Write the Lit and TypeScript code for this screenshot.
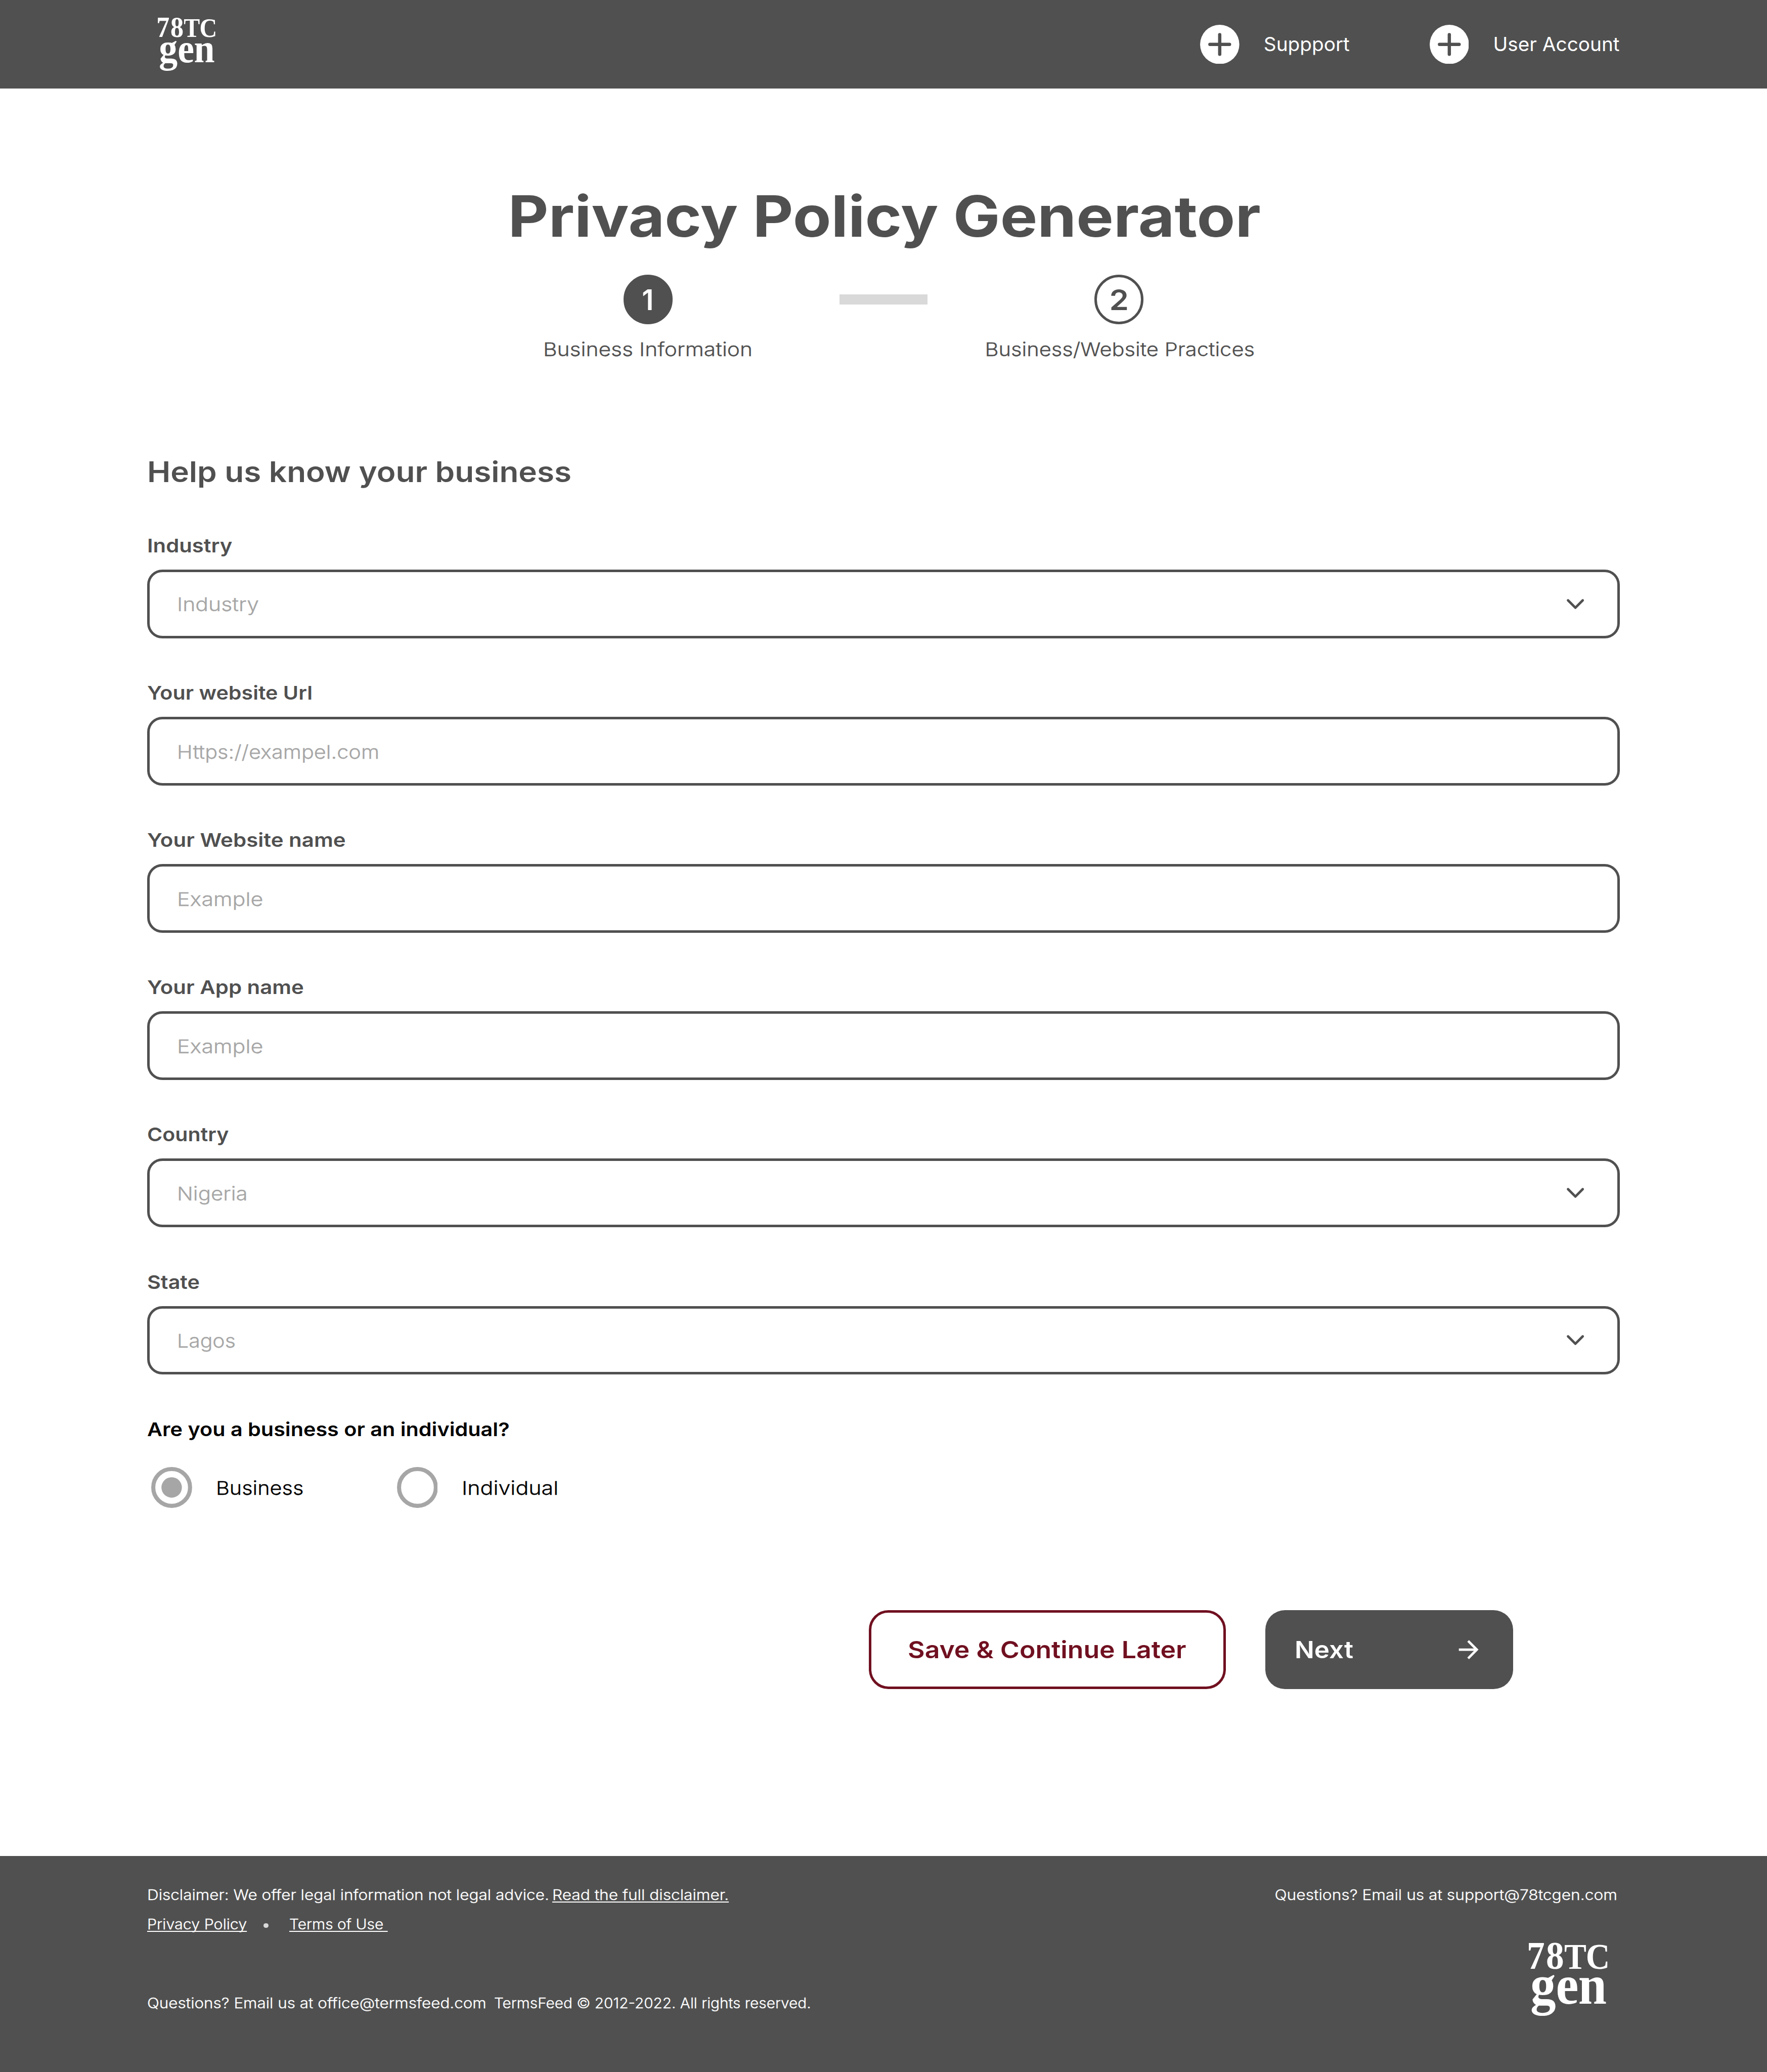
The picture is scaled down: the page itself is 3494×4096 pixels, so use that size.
import { LitElement, html, css, svg, nothing, unsafeCSS } from "lit";
import { customElement, property, state } from "lit/decorators.js";
import { styleMap } from "lit/directives/style-map.js";

// Artboard units (4320 wide) converted to pixels of the 3494px wide page.
const u = (n: number) => unsafeCSS(`${((n * 3494) / 4320).toFixed(3)}px`);

// Draws a run of text widened by a factor, optionally lowered by whole pixels.
const wide = (text: string, factor: number, cls = "", drop = 1) =>
  html`<span class="wide ${cls}" style=${styleMap({ transform: `translateY(${drop}px) scaleX(${factor})` })}>${text}</span>`;

const shared = css`
  * {
    box-sizing: border-box;
  }
  .wide {
    display: inline-block;
    transform-origin: left center;
    white-space: pre;
  }
  .mid {
    transform-origin: center;
  }
  .t48 {
    font-size: ${u(46.22)};
    font-weight: 300;
    line-height: ${u(58)};
    white-space: pre;
    -webkit-text-stroke: 0.4px currentColor;
  }
  .semi {
    font-weight: 600;
    -webkit-text-stroke: 0;
  }
`;

@customElement("brand-logo")
export class BrandLogo extends LitElement {
  static styles = css`
    :host {
      display: block;
    }
    .mark {
      display: block;
      width: 100%;
      height: 100%;
      overflow: visible;
    }
    .word {
      fill: #fff;
      font-family: "Liberation Serif", "Times New Roman", serif;
      font-weight: 700;
    }
  `;

  private xs(positions: number[], scale: number) {
    return positions.map((x) => (x / scale).toFixed(1)).join(" ");
  }

  render() {
    return html`<svg class="mark" viewBox="130 131 436 385">
      <text class="word" y="272" transform="scale(0.92 1)" font-size="210"><tspan x=${this.xs([127, 230], 0.92)}>78</tspan><tspan font-size="194" x=${this.xs([328, 444], 0.92)}>TC</tspan></text>
      <text class="word" y="459" transform="scale(0.92 1)" font-size="298" x=${this.xs([146, 283, 403], 0.92)}>gen</text>
    </svg>`;
  }
}

@customElement("site-header")
export class SiteHeader extends LitElement {
  static styles = [
    shared,
    css`
      :host {
        display: block;
      }
      .bar {
        display: flex;
        justify-content: space-between;
        align-items: center;
        height: ${u(216)};
        padding: 0 ${u(360)} 0 ${u(383.3)};
        background: #505050;
        color: #fff;
      }
      .logo {
        width: ${u(145.3)};
        height: ${u(128.3)};
      }
      .nav {
        display: grid;
        grid-template-columns: ${u(561)} ${u(465)};
      }
      .item {
        display: flex;
        align-items: center;
        gap: ${u(59.5)};
        font-size: ${u(47.9)};
        line-height: ${u(58)};
        white-space: nowrap;
      }
      .plus {
        display: block;
        width: ${u(96)};
        height: ${u(96)};
      }
    `,
  ];

  private item(label: string) {
    return html`<div class="item">
      <svg class="plus" viewBox="0 0 96 96">
        <circle cx="48" cy="48" r="48" fill="#fff" />
        <path d="M24 48H72M48 24V72" stroke="#505050" stroke-width="8" stroke-linecap="round" />
      </svg>
      <span>${label}</span>
    </div>`;
  }

  render() {
    return html`<header class="bar">
      <brand-logo class="logo"></brand-logo>
      <nav class="nav">${this.item("Suppport")}${this.item("User Account")}</nav>
    </header>`;
  }
}

@customElement("form-field")
export class FormField extends LitElement {
  @property() label = "";
  @property() placeholder = "";
  @property({ type: Number }) labelWiden = 1.1;
  @property({ type: Number }) widen = 1.1;
  @property({ type: Boolean }) select = false;

  static styles = [
    shared,
    css`
      :host {
        display: block;
      }
      .label {
        height: ${u(58)};
        color: #505050;
      }
      .box {
        display: flex;
        justify-content: space-between;
        align-items: center;
        height: ${u(168)};
        margin-top: ${u(29.8)};
        padding: 0 ${u(66)};
        border: 5px solid #505050;
        border-radius: ${u(37)};
        color: #a6a6a6;
      }
      .chevron {
        display: block;
        width: ${u(72)};
        height: ${u(72)};
      }
    `,
  ];

  render() {
    return html`<div class="label t48 semi">${wide(this.label, this.labelWiden)}</div>
      <div class="box">
        ${wide(this.placeholder, this.widen, "t48", 2)}
        ${this.select
          ? html`<svg class="chevron" viewBox="0 0 72 72" fill="none">
              <path
                d="M18 27L36 45L54 27"
                stroke="#505050"
                stroke-width="6"
                stroke-linecap="round"
                stroke-linejoin="round"
              />
            </svg>`
          : nothing}
      </div>`;
  }
}

@customElement("site-footer")
export class SiteFooter extends LitElement {
  static styles = [
    shared,
    css`
      :host {
        display: block;
      }
      .foot {
        display: flex;
        justify-content: space-between;
        height: ${u(528)};
        padding: ${u(73.4)} ${u(360)} 0;
        background: #505050;
        color: #fff;
        font-size: ${u(34.67)};
        font-weight: 300;
        line-height: ${u(44)};
        -webkit-text-stroke: 0.35px currentColor;
      }
      .row {
        display: grid;
        align-items: center;
        justify-items: start;
        height: ${u(44)};
      }
      .notice {
        grid-template-columns: ${u(990.5)} auto;
      }
      .links {
        grid-template-columns: ${u(284.6)} ${u(62.9)} auto;
        margin-top: ${u(28)};
      }
      .legal {
        grid-template-columns: ${u(848)} auto;
        margin-top: ${u(147.7)};
      }
      .link {
        text-decoration: underline;
        text-decoration-thickness: 2px;
        text-underline-offset: 2.6px;
        text-decoration-skip-ink: none;
      }
      .dot {
        width: ${u(12)};
        height: ${u(12)};
        margin-top: ${u(6)};
        border-radius: 50%;
        background: #d9d9d9;
      }
      .side {
        display: flex;
        flex-direction: column;
        align-items: flex-end;
      }
      .support {
        margin-right: ${u(6)};
        transform-origin: right center;
      }
      .logo {
        width: ${u(199)};
        height: ${u(175.6)};
        margin: ${u(94.6)} ${u(27)} 0 0;
        -webkit-text-stroke: 0;
      }
    `,
  ];

  render() {
    return html`<footer class="foot">
      <div>
        <div class="row notice">
          ${wide("Disclaimer: We offer legal information not legal advice.", 1.123)}
          ${wide("Read the full disclaimer.", 1.129, "link")}
        </div>
        <div class="row links">
          ${wide("Privacy Policy", 1.085, "link")}
          <i class="dot"></i>
          ${wide("Terms of Use ", 1.067, "link")}
        </div>
        <div class="row legal">
          ${wide("Questions? Email us at office@termsfeed.com", 1.121, "", 2)}
          ${wide("TermsFeed © 2012-2022. All rights reserved.", 1.0615, "", 2)}
        </div>
      </div>
      <div class="side">
        ${wide("Questions? Email us at support@78tcgen.com", 1.131, "support")}
        <brand-logo class="logo"></brand-logo>
      </div>
    </footer>`;
  }
}

@customElement("app-root")
export class AppRoot extends LitElement {
  @state() private entity = "Business";

  static styles = [
    shared,
    css`
      :host {
        display: block;
        background: #fff;
        font-family: Inter, "Liberation Sans", sans-serif;
        color: #505050;
      }
      .main {
        height: ${u(4320)};
        padding: ${u(224.6)} ${u(360)} 0;
      }
      .title {
        height: ${u(176)};
        margin: 0;
        padding-left: ${u(3)};
        font-size: ${u(138.67)};
        font-weight: 700;
        line-height: ${u(176)};
        text-align: center;
      }
      .steps {
        display: flex;
        justify-content: center;
        gap: ${u(138)};
        margin-top: ${u(55.4)};
      }
      .step {
        display: flex;
        flex-direction: column;
        align-items: center;
        width: ${u(660)};
      }
      .num {
        display: flex;
        align-items: center;
        justify-content: center;
        width: ${u(120)};
        height: ${u(120)};
        margin-bottom: ${u(32.2)};
        border: 5px solid #505050;
        border-radius: 50%;
        font-size: ${u(70)};
        font-weight: 600;
        line-height: 1;
      }
      .current {
        background: #505050;
        color: #fff;
      }
      .practices {
        padding-left: ${u(2)};
      }
      .dash {
        width: ${u(216)};
        height: ${u(24)};
        margin-top: ${u(48)};
        background: #d9d9d9;
      }
      .heading {
        height: ${u(88)};
        margin: ${u(227.8)} 0 ${u(106.4)};
        font-size: ${u(69.33)};
        font-weight: 600;
        line-height: ${u(88)};
      }
      .fields {
        display: grid;
        gap: ${u(104.2)};
      }
      .question {
        height: ${u(58)};
        margin-top: ${u(104.2)};
        color: #000;
      }
      .radios {
        display: grid;
        grid-template-columns: ${u(600)} ${u(600)};
        margin: ${u(63.8)} 0 0 ${u(10)};
        color: #000;
      }
      .radio {
        display: flex;
        align-items: center;
        gap: ${u(58.5)};
        height: ${u(100)};
      }
      .ring {
        display: block;
        width: ${u(100)};
        height: ${u(100)};
      }
      .actions {
        display: flex;
        justify-content: flex-end;
        gap: ${u(96)};
        margin: ${u(250)} ${u(261)} 0 0;
      }
      .btn {
        display: flex;
        align-items: center;
        height: ${u(192)};
        border-radius: ${u(48)};
        font-size: ${u(57.78)};
        font-weight: 600;
        line-height: ${u(72)};
      }
      .save {
        width: ${u(873)};
        padding-left: ${u(89)};
        border: 5px solid #701020;
        color: #701020;
      }
      .next {
        justify-content: space-between;
        width: ${u(606)};
        padding: 0 ${u(72)};
        background: #505050;
        color: #fff;
      }
      .arrow {
        display: block;
        width: ${u(72)};
        height: ${u(72)};
      }
    `,
  ];

  private radio(name: string, factor: number) {
    return html`<div class="radio" @click=${() => (this.entity = name)}>
      <svg class="ring" viewBox="0 0 100 100">
        <circle cx="50" cy="50" r="45" fill="none" stroke="#a6a6a6" stroke-width="10" />
        ${this.entity === name ? svg`<circle cx="50" cy="50" r="25" fill="#a6a6a6" />` : nothing}
      </svg>
      ${wide(name, factor, "t48", 2)}
    </div>`;
  }

  private field(label: string, labelWiden: number, placeholder: string, widen: number, select = false) {
    return html`<form-field
      .label=${label}
      .labelWiden=${labelWiden}
      .placeholder=${placeholder}
      .widen=${widen}
      .select=${select}
    ></form-field>`;
  }

  render() {
    return html`
      <site-header></site-header>
      <main class="main">
        <h1 class="title">${wide("Privacy Policy Generator", 1.103, "mid", 0)}</h1>
        <div class="steps">
          <div class="step">
            <div class="num current">${wide("1", 0.97, "mid")}</div>
            ${wide("Business Information", 1.138, "mid t48")}
          </div>
          <div class="dash"></div>
          <div class="step">
            <div class="num">${wide("2", 1.09, "mid")}</div>
            ${wide("Business/Website Practices", 1.114, "mid t48 practices")}
          </div>
        </div>
        <h2 class="heading">${wide("Help us know your business", 1.105, "", 0)}</h2>
        <div class="fields">
          ${this.field("Industry", 1.118, "Industry", 1.144, true)}
          ${this.field("Your website Url", 1.103, "Https://exampel.com", 1.108)}
          ${this.field("Your Website name", 1.124, "Example", 1.15)}
          ${this.field("Your App name", 1.122, "Example", 1.15)}
          ${this.field("Country", 1.1, "Nigeria", 1.123, true)}
          ${this.field("State", 1.105, "Lagos", 1.097, true)}
        </div>
        <div class="question t48 semi">${wide("Are you a business or an individual?", 1.106)}</div>
        <div class="radios">${this.radio("Business", 1.107)}${this.radio("Individual", 1.15)}</div>
        <div class="actions">
          <div class="btn save">${wide("Save & Continue Later", 1.107, "", 0)}</div>
          <div class="btn next">
            ${wide("Next", 1.095, "", 0)}
            <svg class="arrow" viewBox="0 0 72 72" fill="none">
              <path d="M12 36H56M34.7 14.7L55.8 36L34.7 57.3" stroke="#fff" stroke-width="6" />
            </svg>
          </div>
        </div>
      </main>
      <site-footer></site-footer>
    `;
  }
}
